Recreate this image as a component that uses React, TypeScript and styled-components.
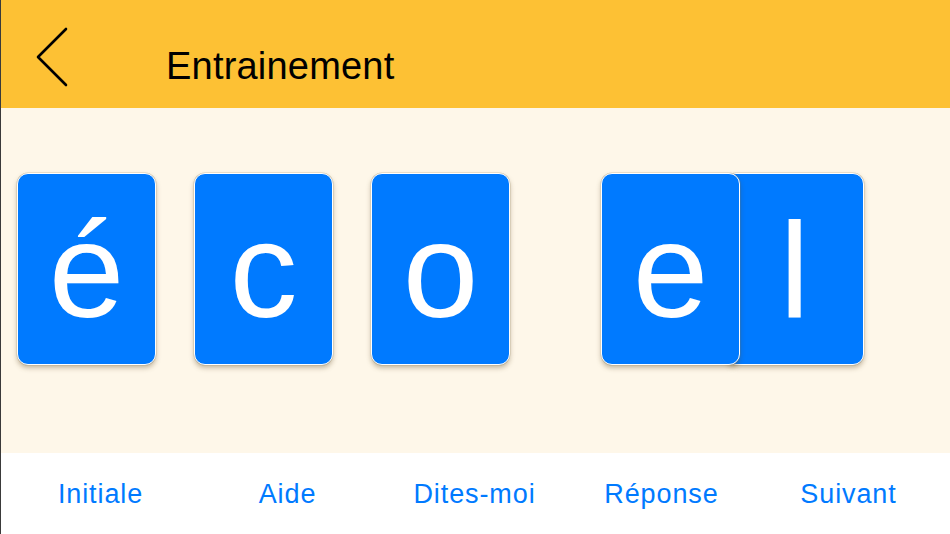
import React from 'react'
import styled, { createGlobalStyle } from 'styled-components'

const GlobalStyle = createGlobalStyle`
  html, body {
    margin: 0;
    padding: 0;
    width: 950px;
    height: 534px;
    overflow: hidden;
    font-family: "Liberation Sans", Arial, sans-serif;
  }
`

const Screen = styled.div`
  width: 950px;
  height: 534px;
  display: flex;
  flex-direction: column;
  box-sizing: border-box;
  border-left: 1px solid #3a3a3a;
`

const Header = styled.div`
  height: 108px;
  flex: none;
  background-color: #fdc134;
  display: flex;
  align-items: flex-start;
  padding: 27px 0 0 34px;
  box-sizing: border-box;
`

const BackButton = styled.button`
  border: none;
  background: none;
  padding: 0;
  width: 36px;
  height: 62px;
  display: flex;
  cursor: pointer;
`

const Title = styled.h1`
  margin: 17px 0 0 95px;
  font-size: 38px;
  font-weight: 400;
  line-height: 44px;
  color: #000;
  letter-spacing: 0.2px;
`

const Board = styled.div`
  flex: 1;
  background-color: #fef7e9;
  padding: 65px 0 0 16px;
  box-sizing: border-box;
`

const TileRow = styled.div`
  display: flex;
  align-items: flex-start;
`

const Tile = styled.div<{ $ml?: number; $z?: number }>`
  position: relative;
  z-index: ${p => p.$z ?? 1};
  width: 139px;
  height: 192px;
  margin-left: ${p => p.$ml ?? 0}px;
  box-sizing: border-box;
  background-color: #007aff;
  border: 1.5px solid #fff;
  border-radius: 11px;
  box-shadow: 0 0 0 0.5px rgba(150, 130, 90, 0.35), 0 3px 5px rgba(90, 70, 30, 0.35);
  display: flex;
  align-items: center;
  justify-content: center;
  color: #fff;
  font-size: 136px;
  line-height: 1;
  padding-top: 1px;
`

const TabBar = styled.div`
  height: 81px;
  flex: none;
  background-color: #fff;
  display: grid;
  grid-template-columns: repeat(5, 1fr);
  align-items: center;
  padding: 0 8px 0 6px;
  box-sizing: border-box;
`

const Tab = styled.button`
  border: none;
  background: none;
  color: #007aff;
  font-family: "Liberation Sans", Arial, sans-serif;
  font-size: 27px;
  padding: 1px 0 0 0;
  cursor: pointer;
  letter-spacing: 0.9px;
`

const tiles = [
  { ch: 'é', ml: 0 },
  { ch: 'c', ml: 38 },
  { ch: 'o', ml: 38 },
  { ch: 'e', ml: 91, z: 2 },
  { ch: 'l', ml: -15 },
]

const tabs = ['Initiale', 'Aide', 'Dites-moi', 'Réponse', 'Suivant']

const App = () => {
  return (
    <Screen>
      <GlobalStyle />
      <Header>
        <BackButton aria-label="Retour">
          <svg width="36" height="62" viewBox="0 0 36 62">
            <path d="M31 2 L3 30 L31 58" fill="none" stroke="#000" strokeWidth="2.6" strokeLinecap="round" strokeLinejoin="round" />
          </svg>
        </BackButton>
        <Title>Entrainement</Title>
      </Header>
      <Board>
        <TileRow>
          {tiles.map((t, i) => (
            <Tile key={i} $ml={t.ml} $z={t.z}>{t.ch}</Tile>
          ))}
        </TileRow>
      </Board>
      <TabBar>
        {tabs.map(t => (
          <Tab key={t}>{t}</Tab>
        ))}
      </TabBar>
    </Screen>
  )
}

export default App
